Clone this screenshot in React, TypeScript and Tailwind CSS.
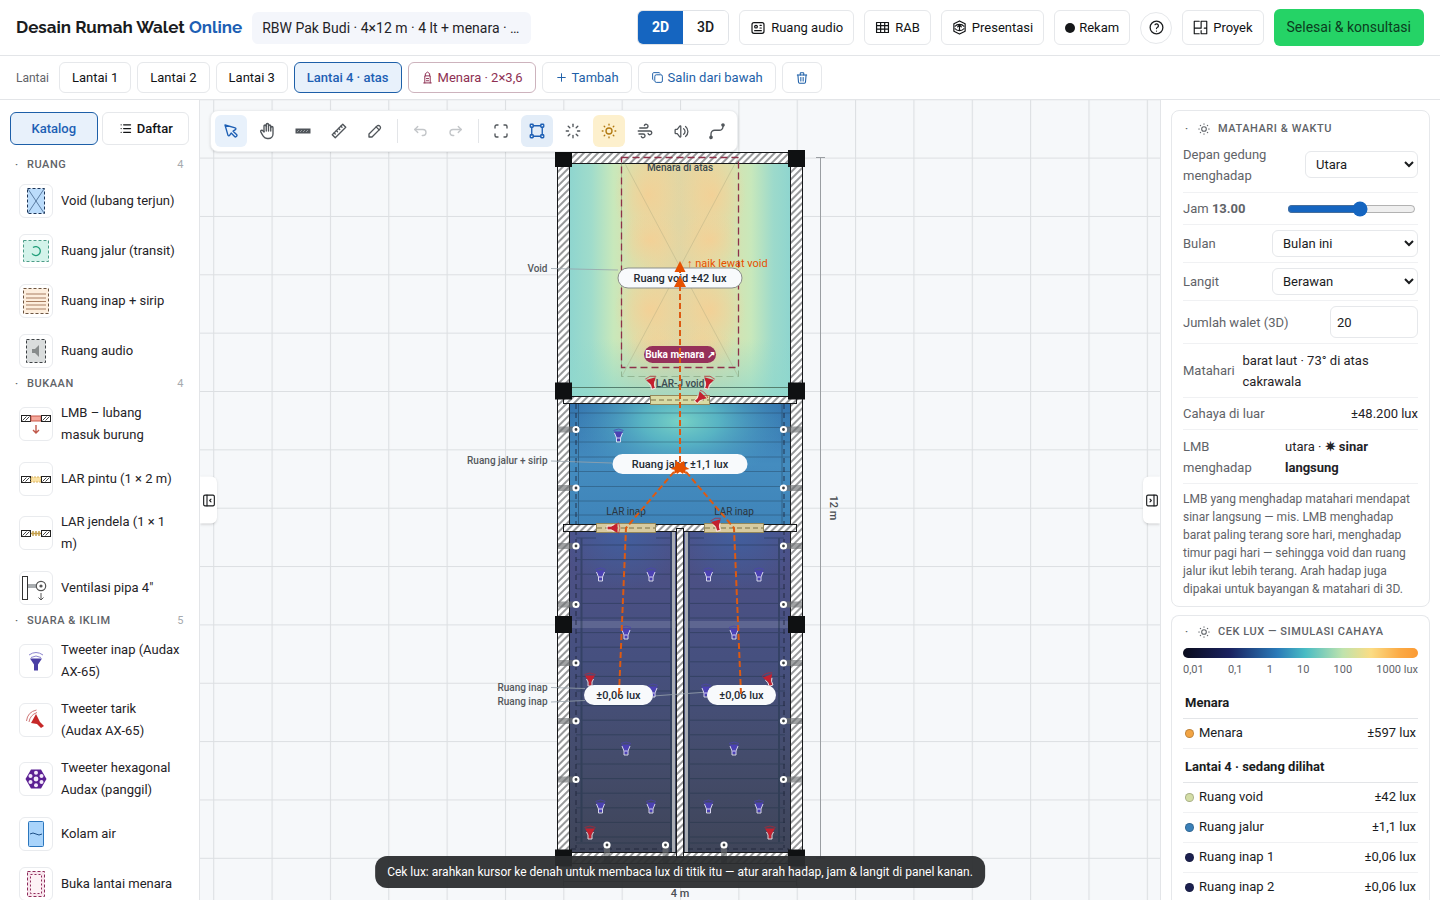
import React from "react";
import type { ReactNode } from "react";
import {
  TbPointer,
  TbHandStop,
  TbRuler2,
  TbPencil,
  TbArrowBackUp,
  TbArrowForwardUp,
  TbMaximize,
  TbVector,
  TbLoader,
  TbSun,
  TbWind,
  TbVolume,
  TbId,
  TbHelp,
  TbTrash,
  TbCopy,
  TbList,
  TbPlus,
  TbLayoutSidebarLeftCollapse,
  TbLayoutSidebarRightCollapse,
} from "react-icons/tb";

/* ---------- small custom icons ---------- */

function Line({ children, size = 16, width = 1.6 }: { children: ReactNode; size?: number; width?: number }) {
  return (
    <svg
      width={size}
      height={size}
      viewBox="0 0 24 24"
      fill="none"
      stroke="currentColor"
      strokeWidth={width}
      strokeLinecap="round"
      strokeLinejoin="round"
      aria-hidden="true"
    >
      {children}
    </svg>
  );
}

const TableIcon = () => (
  <Line size={15} width={1.9}>
    <path d="M2.500 4h19v16h-19zM2.500 9h19M2.500 14.500h19M9 4v16M15.500 4v16" />
  </Line>
);

const CubeIcon = () => (
  <Line size={15} width={1.9}>
    <path d="M12 1.500l9 4.500v12l-9 4.500l-9 -4.500v-12z" />
    <path d="M5 10c3 -4 11 -4 14 0M5 14c3 4 11 4 14 0M12 9v8M9 11l3 -2.500l3 2.500" />
  </Line>
);

const PlanIcon = () => (
  <Line size={15} width={1.8}>
    <path d="M10 2H2v20h8M2 13h7M13 2v11h-3M13 2h9v20h-9v-5M22 13h-4" />
  </Line>
);

const TowerIcon = () => (
  <Line size={13} width={1.8}>
    <path d="M5 22h14M7 22V9h10v13M8 9V5l4 -3l4 3v4M10 14h4M10 18h4" />
  </Line>
);

const WallIcon = () => (
  <svg width="18" height="18" viewBox="0 0 18 18" aria-hidden="true">
    <rect x="1.500" y="6.500" width="15" height="5" fill="currentColor" />
    <path d="M3 10l2-2M6 10l2-2M9 10l2-2M12 10l2-2" stroke="#c8ccd0" strokeWidth=".6" />
  </svg>
);

const PathIcon = () => (
  <Line size={18} width={1.8}>
    <path d="M4 20v-4a5 5 0 0 1 5 -5h6a5 5 0 0 0 5 -5" />
    <circle cx="4" cy="20.500" r="1.500" fill="currentColor" />
    <circle cx="20" cy="4" r="1.500" fill="currentColor" />
  </Line>
);

/* ---------- header ---------- */

const headerButton =
  "flex h-[35px] items-center gap-[5px] rounded-md border border-[#e6e8eb] bg-white px-[10px] text-[13px] text-[#111315]";

function Header() {
  return (
    <header className="flex h-14 shrink-0 items-center gap-[10px] border-b border-[#e3e5e8] px-4">
      <h1 className="whitespace-nowrap font-['Raleway','Lato',sans-serif] text-[17px] font-bold text-[#1a1c1e]">
        Desain Rumah Walet <span className="text-[#1d5fb4]">Online</span>
      </h1>
      <div className="w-[279px] truncate rounded-md bg-[#f4f6fb] px-[10px] py-[6px] text-[14px] leading-5 text-[#1f2327]">
        RBW Pak Budi · 4×12 m · 4 lt + menara · …
      </div>
      <div className="ml-auto flex items-center gap-[10px]">
        <div className="flex h-[35px] overflow-hidden rounded-md border border-[#e0e3e7]">
          <button type="button" className="w-[45px] bg-[#1565c0] text-[14px] font-bold text-white">
            2D
          </button>
          <button type="button" className="w-[45px] bg-white text-[14px] font-medium text-[#1a1c1e]">
            3D
          </button>
        </div>
        <button type="button" className={headerButton}>
          <TbId size={16} strokeWidth={1.8} /> Ruang audio
        </button>
        <button type="button" className={headerButton}>
          <TableIcon /> RAB
        </button>
        <button type="button" className={headerButton}>
          <CubeIcon /> Presentasi
        </button>
        <button
          type="button"
          className="flex h-[35px] items-center gap-1 rounded-md border border-[#e6e8eb] bg-white px-[10px] text-[13px] text-[#111315]"
        >
          <span className="size-[10px] rounded-full bg-[#151719]" /> Rekam
        </button>
        <button
          type="button"
          aria-label="Bantuan"
          className="flex size-8 items-center justify-center rounded-full border border-[#e6e8eb] text-[#1a1c1e]"
        >
          <TbHelp size={17} strokeWidth={1.8} />
        </button>
        <button type="button" className={headerButton}>
          <PlanIcon /> Proyek
        </button>
        <button type="button" className="h-[37px] rounded-md bg-[#25d366] px-[13px] text-[14px] text-[#0b3d1e]">
          Selesai &amp; konsultasi
        </button>
      </div>
    </header>
  );
}

const floorButton = "flex h-[31px] items-center gap-1 rounded-md border px-3 text-[13px]";

function FloorBar() {
  return (
    <nav aria-label="Lantai" className="flex h-11 shrink-0 items-center gap-[6px] border-b border-[#e3e5e8] px-4">
      <span className="mr-1 text-[12px] text-[#5f6368]">Lantai</span>
      {["Lantai 1", "Lantai 2", "Lantai 3"].map((name) => (
        <button key={name} type="button" className={`${floorButton} border-[#e6e8eb] text-[#111315]`}>
          {name}
        </button>
      ))}
      <button type="button" className={`${floorButton} border-[#1d5fa8] bg-[#e8f1fb] font-medium text-[#1d5fb4]`}>
        Lantai 4 · atas
      </button>
      <button type="button" className={`${floorButton} border-[#cdb3bd] text-[#8e2f52]`}>
        <TowerIcon /> Menara · 2×3,6
      </button>
      <button type="button" className={`${floorButton} border-[#e6e8eb] text-[#1d5fa8]`}>
        <TbPlus size={13} strokeWidth={1.8} /> Tambah
      </button>
      <button type="button" className={`${floorButton} border-[#e6e8eb] text-[#1d5fa8]`}>
        <TbCopy size={13} strokeWidth={1.8} /> Salin dari bawah
      </button>
      <button type="button" aria-label="Hapus lantai" className={`${floorButton} border-[#e6e8eb] text-[#1d5fa8]`}>
        <TbTrash size={14} strokeWidth={1.8} />
      </button>
    </nav>
  );
}

/* ---------- catalogue ---------- */

const Hatch = ({ x, y, w }: { x: number; y: number; w: number }) => (
  <g>
    <rect x={x} y={y} width={w} height="6" fill="#fff" stroke="#222" />
    <path d={`M${x + 1} ${y + 5}l4 -4M${x + 4} ${y + 5}l4 -4`} stroke="#333" strokeWidth=".9" />
  </g>
);

const icons: Record<string, ReactNode> = {
  void: (
    <>
      <rect x="7.500" y="3.500" width="17" height="25" fill="#bbdcfb" stroke="#1d3557" strokeDasharray="3 2" />
      <path d="M8 4l16 24M24 4L8 28" stroke="#44658c" strokeWidth=".8" />
    </>
  ),
  jalur: (
    <>
      <rect x="3.500" y="5.500" width="25" height="21" fill="#d3f3ea" stroke="#4d9d88" strokeDasharray="3 2" />
      <path d="M13 12.500a4.500 4.500 0 1 1 -1 6" fill="none" stroke="#1f9d78" strokeWidth="1.300" />
    </>
  ),
  inap: (
    <>
      <rect x="3.500" y="3.500" width="25" height="25" fill="#fdeedd" stroke="#6d5540" strokeDasharray="3 2" />
      <path d="M6 9h20M6 13h20M6 16.500h20M6 20h20M6 24h20" stroke="#a97f62" />
    </>
  ),
  audio: (
    <>
      <rect x="6.500" y="4.500" width="19" height="23" fill="#dadddd" stroke="#3d4144" strokeDasharray="3 2" />
      <path d="M12 14h3l4 -4v12l-4 -4h-3z" fill="#888c8c" />
    </>
  ),
  lmb: (
    <>
      <Hatch x={1.5} y={7.5} w={9} />
      <rect x="11" y="8" width="10" height="5" fill="#f5a79a" stroke="#c9584a" />
      <Hatch x={21.5} y={7.5} w={9} />
      <path d="M16 17v8m-3 -3l3 3l3 -3" fill="none" stroke="#c0584a" strokeWidth="1.400" />
    </>
  ),
  pintu: (
    <>
      <Hatch x={1.5} y={13.5} w={9} />
      <rect x="11" y="14" width="10" height="5" fill="#fbe2a3" stroke="#d9b262" strokeDasharray="2 1" />
      <Hatch x={21.5} y={13.5} w={9} />
    </>
  ),
  jendela: (
    <>
      <Hatch x={1.5} y={13.5} w={9} />
      <path d="M11 16.500h10M13 14v5M16 14v5M19 14v5" stroke="#c4a04c" strokeWidth="1.500" />
      <Hatch x={21.5} y={13.5} w={9} />
    </>
  ),
  pipa: (
    <>
      <rect x="2.500" y="4.500" width="5" height="23" fill="#fff" stroke="#333" />
      <rect x="8" y="12" width="9" height="4" fill="#a9adb0" />
      <circle cx="21" cy="14" r="4.700" fill="#fff" stroke="#555" strokeWidth="1.200" />
      <circle cx="21" cy="14" r="1.600" fill="#555" />
      <path d="M21 21v7m-2.500 -2.500l2.500 2.500l2.500 -2.500" fill="none" stroke="#555" />
    </>
  ),
  tweeterInap: (
    <>
      <path d="M10 13.500h12l-4 6v6h-4v-6z" fill="#4a3fa5" />
      <path d="M9 10q7 -5 14 0M11 12.500q5 -3 10 0" fill="none" stroke="#8d86cf" />
    </>
  ),
  tweeterTarik: (
    <>
      <path d="M16 10l-5 9l6 1l4 4l3 -2l-4 -4z" fill="#c62828" />
      <path d="M6.500 17q1 -9 10 -11M9 18q1 -7 8 -9.500" fill="none" stroke="#cf7777" />
    </>
  ),
  hexagonal: (
    <>
      <path d="M11 6.500h10l5.500 9.500l-5.500 9.500H11L5.500 16z" fill="#5b1f93" />
      <g fill="#f3e9fb">
        <circle cx="16" cy="16" r="2.400" />
        <circle cx="16" cy="9.800" r="2" />
        <circle cx="16" cy="22.200" r="2" />
        <circle cx="10.500" cy="13" r="2" />
        <circle cx="21.500" cy="13" r="2" />
        <circle cx="10.500" cy="19" r="2" />
        <circle cx="21.500" cy="19" r="2" />
      </g>
    </>
  ),
  kolam: (
    <>
      <rect x="8.500" y="3.500" width="15" height="25" rx="1" fill="#a9d4fb" stroke="#2b76bd" />
      <path d="M10 16q3 -2 6 0t6 0" fill="none" stroke="#1d4f86" />
    </>
  ),
  menara: (
    <>
      <rect x="7.500" y="3.500" width="17" height="25" fill="#f8e4ec" stroke="#8e2a5a" strokeDasharray="3 2" />
      <rect x="10.500" y="6.500" width="11" height="19" fill="#fdf2f6" stroke="#8e2a5a" strokeDasharray="2 2" />
    </>
  ),
};

const groups = [
  {
    title: "RUANG",
    count: 4,
    items: [
      ["void", "Void (lubang terjun)"],
      ["jalur", "Ruang jalur (transit)"],
      ["inap", "Ruang inap + sirip"],
      ["audio", "Ruang audio"],
    ],
  },
  {
    title: "BUKAAN",
    count: 4,
    items: [
      ["lmb", "LMB – lubang masuk burung"],
      ["pintu", "LAR pintu (1 × 2 m)"],
      ["jendela", "LAR jendela (1 × 1 m)"],
      ["pipa", 'Ventilasi pipa 4"'],
    ],
  },
  {
    title: "SUARA & IKLIM",
    count: 5,
    items: [
      ["tweeterInap", "Tweeter inap (Audax AX-65)"],
      ["tweeterTarik", "Tweeter tarik (Audax\u00a0AX-65)"],
      ["hexagonal", "Tweeter hexagonal Audax (panggil)"],
      ["kolam", "Kolam air"],
      ["menara", "Buka lantai menara"],
    ],
  },
];

function Catalogue() {
  return (
    <aside className="w-[200px] shrink-0 overflow-hidden border-r border-[#e3e5e8] bg-white">
      <div className="flex gap-1 px-[10px] pt-3 pb-3">
        <button
          type="button"
          className="h-[33px] flex-1 rounded-md border border-[#1d5fa8] bg-[#e8f1fb] text-[13px] font-medium text-[#1d5fb4]"
        >
          Katalog
        </button>
        <button
          type="button"
          className="flex h-[33px] flex-1 items-center justify-center gap-1 rounded-md border border-[#e6e8eb] text-[13px] font-medium text-[#111315]"
        >
          <TbList size={15} strokeWidth={2} /> Daftar
        </button>
      </div>
      {groups.map((group) => (
        <section key={group.title}>
          <h2 className="flex h-[19px] items-start justify-between px-[15px] pt-px text-[11px] leading-[14px] font-medium tracking-wider text-[#5f6368]">
            <span>
              <span className="inline-block w-3">·</span>
              {group.title}
            </span>
            <span className="font-normal text-[#a6aaae]">{group.count}</span>
          </h2>
          <ul>
            {group.items.map(([icon, name]) => (
              <li key={icon} className="flex min-h-[50px] items-center gap-2 pt-[7px] pr-4 pb-2 pl-[19px]">
                <span className="flex size-[34px] shrink-0 items-center justify-center rounded-md border border-[#e9ebee]">
                  <svg width="32" height="32" viewBox="0 0 32 32" aria-hidden="true">
                    {icons[icon]}
                  </svg>
                </span>
                <span className="text-[13px] leading-[22px] text-[#1f2327]">{name}</span>
              </li>
            ))}
          </ul>
        </section>
      ))}
    </aside>
  );
}

/* ---------- floor plan ---------- */

const ventRows = [429.5, 488, 546, 604.5, 663, 721, 779.5];
const ventCols = [607, 665.5, 724];
const columnRows = [158.5, 391, 624.5, 858];
const corridorFins = [413, 427.5, 442, 457, 471.5, 486.5, 501, 515];
const roostFins = Array.from({ length: 21 }, (_, i) => 545 + i * 14.6);

const blueTweeters = [
  [618.5, 436], [600.5, 575], [651, 575], [708.5, 575], [759, 575], [626, 633], [734, 633],
  [653, 691], [706, 691], [626, 749], [734, 749], [600.5, 807], [651, 807], [708.5, 807], [759, 807],
];

const redTweeters = [
  [590, 680, 0], [769, 680, -20], [590, 833, 0], [770, 833, 0],
  [652, 383, -15], [708, 383, 15], [700, 398, 45], [613, 528, 90], [717, 525, -15],
];

function Tweeter({ x, y, turn = 0, color }: { x: number; y: number; turn?: number; color: string }) {
  return (
    <g transform={`translate(${x} ${y}) rotate(${turn})`}>
      <path d="M-4.500 -4.500h9l-2.500 5.500v4h-4v-4z" fill={color} />
      <path d="M-4 -3l2 5v4h4v-4l2 -5M-1.500 2h3" fill="none" stroke="#e6e4fb" strokeWidth=".9" />
      <path d="M-5 -5.500q5 -3 10 0" fill="none" stroke={color} strokeWidth="1" opacity=".7" />
    </g>
  );
}

function RedTweeter({ x, y, turn }: { x: number; y: number; turn: number }) {
  return (
    <g transform={`translate(${x} ${y}) rotate(${turn})`}>
      <path d="M-5 -4.500h10l-3.500 6v4h-3v-4z" fill="#c4202f" />
      <path d="M-3.500 -1l1.500 3v4h4v-4l1.500 -3" fill="none" stroke="#fbe3e3" strokeWidth=".9" />
      <path d="M-5.500 -5.500q5.500 -3 11 0" fill="none" stroke="#c4202f" strokeWidth=".9" opacity=".7" />
    </g>
  );
}

function Pill({ x, y, w, stroke = "none", children }: { x: number; y: number; w: number; stroke?: string; children: string }) {
  return (
    <g>
      <rect x={x - w / 2} y={y - 10} width={w} height="20" rx="10" fill="#f8fafc" stroke={stroke} />
      <text x={x} y={y + 4} textAnchor="middle" fontSize="11" fontWeight="500" fill="#1f2a33">
        {children}
      </text>
    </g>
  );
}

function FloorPlan() {
  return (
    <svg
      role="img"
      aria-label="Denah lantai 4"
      className="block size-full font-['Roboto',sans-serif]"
      viewBox="200 100 960 800"
      preserveAspectRatio="xMidYMid slice"
    >
      <defs>
        <pattern id="grid" x="563.300" y="157.600" width="58.350" height="58.350" patternUnits="userSpaceOnUse">
          <path d="M.5 0V58.350M0 .5H58.350" stroke="#dcdfe2" strokeWidth="1.200" />
        </pattern>
        <pattern id="brick" width="5" height="5" patternUnits="userSpaceOnUse" patternTransform="rotate(45)">
          <rect width="5" height="5" fill="#fff" />
          <path d="M1 0v5" stroke="#303336" strokeWidth="1" />
        </pattern>
        <linearGradient id="voidHeat">
          <stop offset="0" stopColor="#8ed5cf" />
          <stop offset=".1" stopColor="#a0dccb" />
          <stop offset=".2" stopColor="#c8e8bb" />
          <stop offset=".29" stopColor="#dbdfab" />
          <stop offset=".4" stopColor="#e6d8a2" />
          <stop offset=".5" stopColor="#e1d6a4" />
          <stop offset=".6" stopColor="#e6d8a2" />
          <stop offset=".72" stopColor="#d9e0ad" />
          <stop offset=".82" stopColor="#c8e8bb" />
          <stop offset=".92" stopColor="#9ddacb" />
          <stop offset="1" stopColor="#8ed5cf" />
        </linearGradient>
        <linearGradient id="voidFade" x2="0" y2="1">
          <stop offset=".75" stopColor="#8fd8cc" stopOpacity="0" />
          <stop offset="1" stopColor="#8fd8cc" stopOpacity=".75" />
        </linearGradient>
        <radialGradient id="warm">
          <stop offset="0" stopColor="#f5cf94" stopOpacity=".85" />
          <stop offset="1" stopColor="#f1d39a" stopOpacity="0" />
        </radialGradient>
        <linearGradient id="corridor" x2="0" y2="1">
          <stop offset="0" stopColor="#3473ad" />
          <stop offset=".5" stopColor="#448cbf" />
          <stop offset="1" stopColor="#3f84b9" />
        </linearGradient>
        <radialGradient id="glow" cx=".5" cy=".15" r=".5">
          <stop offset="0" stopColor="#78d2c5" />
          <stop offset=".35" stopColor="#5dbdc6" stopOpacity=".85" />
          <stop offset="1" stopColor="#4a9bc6" stopOpacity="0" />
        </radialGradient>
        <linearGradient id="roost" x2="0" y2="1">
          <stop offset="0" stopColor="#4e5087" />
          <stop offset=".4" stopColor="#46507f" />
          <stop offset=".7" stopColor="#444c6c" />
          <stop offset="1" stopColor="#3f4559" />
        </linearGradient>
        <radialGradient id="doorGlow" cx=".5" cy="0" r=".6">
          <stop offset="0" stopColor="#3d63a5" stopOpacity=".8" />
          <stop offset="1" stopColor="#3d63a5" stopOpacity="0" />
        </radialGradient>
      </defs>

      <rect x="0" y="0" width="1640" height="1000" fill="#f6f8fa" />
      <rect x="0" y="0" width="1640" height="1000" fill="url(#grid)" />

      {/* dimension lines */}
      <path
        d="M820.500 157.500V858M816 157.500h9M816 858h9M563.500 881.500h233M563.500 877v9M796.500 877v9"
        stroke="#9a9ea2"
        fill="none"
      />
      <text x="680" y="897" textAnchor="middle" fontSize="11" fontWeight="500" fill="#4b4f53">
        4 m
      </text>
      <text transform="translate(830 508) rotate(90)" textAnchor="middle" fontSize="11" fontWeight="500" fill="#4b4f53">
        12 m
      </text>

      {/* rooms */}
      <rect x="569" y="163" width="222" height="234" fill="url(#voidHeat)" />
      <ellipse cx="648" cy="195" rx="34" ry="50" fill="url(#warm)" />
      <ellipse cx="712" cy="195" rx="34" ry="50" fill="url(#warm)" />
      <ellipse cx="650" cy="240" rx="32" ry="28" fill="url(#warm)" />
      <ellipse cx="710" cy="240" rx="32" ry="28" fill="url(#warm)" />
      <ellipse cx="650" cy="310" rx="36" ry="40" fill="url(#warm)" />
      <ellipse cx="710" cy="310" rx="36" ry="40" fill="url(#warm)" />
      <ellipse cx="656" cy="350" rx="30" ry="24" fill="url(#warm)" />
      <ellipse cx="704" cy="350" rx="30" ry="24" fill="url(#warm)" />
      <rect x="569" y="163" width="222" height="234" fill="url(#voidFade)" />
      <rect x="569" y="403" width="222" height="122" fill="url(#corridor)" />
      <rect x="569" y="403" width="222" height="122" fill="url(#glow)" />
      <rect x="569" y="531" width="108" height="322" fill="url(#roost)" />
      <rect x="683" y="531" width="108" height="322" fill="url(#roost)" />
      <rect x="569" y="531" width="108" height="100" fill="url(#doorGlow)" />
      <rect x="683" y="531" width="108" height="100" fill="url(#doorGlow)" />
      <rect x="569" y="621" width="222" height="7" fill="#8a90b0" opacity=".35" />

      {/* nesting fins */}
      <g stroke="#1c3144" opacity=".42">
        {corridorFins.map((y) => (
          <path key={y} d={`M570 ${y}H790`} strokeWidth=".8" />
        ))}
        {roostFins.map((y) => (
          <path key={y} d={`M576 ${y}H672M688 ${y}H785`} />
        ))}
        <path d="M578.500 404V524M782 404V524" />
        <path d="M581.500 538V842M671 531V853M689 531V853M779 538V842" strokeWidth="2" />
        <path d="M576 538h20M656 538h16M688 538h16M764 538h20M576 843h96M688 843h96" />
      </g>
      <path d="M576 404V848M784 404V848M571 849H789" stroke="#1b2234" strokeDasharray="5 4" opacity=".8" fill="none" />
      <path d="M673.500 532V853M686.500 532V853" stroke="#a9adb3" strokeWidth="3" />
      <path d="M569 387.500H790" stroke="#55806f" />

      {/* walls */}
      <g fill="url(#brick)" stroke="#16181a">
        <rect x="557.500" y="152.500" width="245" height="11" />
        <rect x="557.500" y="163.500" width="12" height="689" />
        <rect x="790.500" y="163.500" width="12" height="689" />
        <rect x="557.500" y="852.500" width="245" height="11" />
        <rect x="563.500" y="396.500" width="87" height="7" />
        <rect x="709.500" y="396.500" width="87" height="7" />
        <rect x="563.500" y="524.500" width="33" height="7" />
        <rect x="655.500" y="524.500" width="49" height="7" />
        <rect x="763.500" y="524.500" width="33" height="7" />
        <rect x="676.500" y="528.500" width="7" height="329" />
      </g>
      <g fill="#d9dba4" stroke="#93875a">
        <rect x="650.500" y="395.500" width="59" height="9" />
        <rect x="596.500" y="523.500" width="59" height="9" fill="#d8cba0" />
        <rect x="704.500" y="523.500" width="59" height="9" fill="#d8cba0" />
      </g>
      <path d="M651 400h58M597 528h58M705 528h58" stroke="#7b7146" strokeDasharray="5 3" />

      {/* pipe vents */}
      {ventRows.map((y) => (
        <g key={y}>
          <path d={`M558 ${y}h18M784 ${y}h18`} stroke="#6f7274" strokeWidth="6" opacity=".65" />
          <g fill="#3d4144" stroke="#fff" strokeWidth="2.200">
            <circle cx="576" cy={y} r="2.500" />
            <circle cx="783.500" cy={y} r="2.500" />
          </g>
        </g>
      ))}
      {ventCols.map((x) => (
        <g key={x}>
          <path d={`M${x} 845v18`} stroke="#6f7274" strokeWidth="6" opacity=".65" />
          <circle cx={x} cy="845" r="2.500" fill="#3d4144" stroke="#fff" strokeWidth="2.200" />
        </g>
      ))}

      {/* columns */}
      {columnRows.map((y) => (
        <g key={y} fill="#0f1112">
          <rect x="555" y={y - 8.5} width="17" height="17" />
          <rect x="788" y={y - 8.5} width="17" height="17" />
        </g>
      ))}

      {/* tower opening above the void */}
      <rect x="621.500" y="157.500" width="117" height="219" fill="none" stroke="#6f8f6a" strokeDasharray="7 4" opacity=".5" />
      <path d="M622 158L738 376M738 158L622 376" stroke="#9c9d78" opacity=".3" />
      <rect
        x="621.500"
        y="157.500"
        width="117"
        height="210"
        fill="none"
        stroke="#8e3049"
        strokeWidth="1.300"
        strokeDasharray="7 4"
      />

      {/* callout labels */}
      <g fontSize="10" fontWeight="500" fill="#55595d" textAnchor="end">
        <text x="547.500" y="272">Void</text>
        <text x="547.500" y="464">Ruang jalur + sirip</text>
        <text x="547.500" y="691">Ruang inap</text>
        <text x="547.500" y="705">Ruang inap</text>
      </g>
      <path
        d="M551 268.500L618 270M551 461L612 463M551 687.500L585 688.500M551 702L585 700.500M653 696L708 692"
        stroke="#97a3ab"
        opacity=".8"
        fill="none"
      />

      {blueTweeters.map(([x, y]) => (
        <Tweeter key={`${x}-${y}`} x={x} y={y} color="#4b41b3" />
      ))}
      {redTweeters.map(([x, y, turn]) => (
        <RedTweeter key={`${x}-${y}`} x={x} y={y} turn={turn === 90 ? 90 : turn} />
      ))}

      <g fontSize="10" fontWeight="500" fill="#3b4a50" textAnchor="middle">
        <text x="680" y="171">Menara di atas</text>
        <text x="680" y="387">LAR-J void</text>
        <g fill="#2a3640" fontWeight="400">
          <text x="626" y="515">LAR inap</text>
          <text x="734" y="515">LAR inap</text>
        </g>
      </g>

      <Pill x={680} y={278} w={124} stroke="#8b8f8c">Ruang void ±42 lux</Pill>
      <Pill x={680} y={464} w={135}>Ruang jalur ±1,1 lux</Pill>
      <Pill x={618.500} y={695} w={69}>±0,06 lux</Pill>
      <Pill x={741.500} y={695} w={69}>±0,06 lux</Pill>

      <rect x="644" y="346" width="72" height="17" rx="8.500" fill="#96305a" />
      <text x="680" y="358" textAnchor="middle" fontSize="10" fontWeight="700" fill="#fff">
        Buka menara ↗
      </text>

      {/* flight route */}
      <g stroke="#dd5a12" strokeWidth="2" strokeDasharray="6 3" fill="none">
        <path d="M680 462V270" />
        <path d="M619 694L626 528L679 466" />
        <path d="M741 694L734 528L681 466" />
      </g>
      <g fill="#e65100">
        <path d="M680 261l5.500 11h-11z" />
        <path d="M680 276l6 11h-12z" />
        <path d="M684 461l2 13l-5 -3l-4 3l-1.500 -4l-5 -1z" />
        <path d="M676 461l-2 13l5 -3l4 3l1.500 -4l5 -1z" />
      </g>
      <text x="687" y="267" fontSize="11" fill="#e65100">
        ↑ naik lewat void
      </text>
    </svg>
  );
}

const tool = "flex size-8 items-center justify-center rounded-md";

function Toolbar() {
  const divider = <span className="mx-[2px] h-6 w-px bg-[#e3e5e8]" />;
  return (
    <div
      role="toolbar"
      aria-label="Alat gambar"
      className="absolute top-[10px] left-[10px] flex items-center gap-1 rounded-lg border border-[#eceef0] bg-white p-1 text-[#50555a] shadow-sm"
    >
      <button type="button" aria-label="Pilih" className={`${tool} bg-[#e8f1fb] text-[#1d5fb4]`}>
        <TbPointer size={18} strokeWidth={1.8} />
      </button>
      <button type="button" aria-label="Geser" className={tool}>
        <TbHandStop size={18} strokeWidth={1.8} />
      </button>
      <button type="button" aria-label="Dinding" className={tool}>
        <WallIcon />
      </button>
      <button type="button" aria-label="Ukur" className={tool}>
        <TbRuler2 size={18} strokeWidth={1.8} />
      </button>
      <button type="button" aria-label="Catatan" className={tool}>
        <TbPencil size={18} strokeWidth={1.8} />
      </button>
      {divider}
      <button type="button" aria-label="Urungkan" className={`${tool} text-[#c3c6c9]`}>
        <TbArrowBackUp size={18} strokeWidth={1.8} />
      </button>
      <button type="button" aria-label="Ulangi" className={`${tool} text-[#c3c6c9]`}>
        <TbArrowForwardUp size={18} strokeWidth={1.8} />
      </button>
      {divider}
      <button type="button" aria-label="Paskan layar" className={tool}>
        <TbMaximize size={18} strokeWidth={1.8} />
      </button>
      <button type="button" aria-label="Bingkai ruang" className={`${tool} bg-[#e3edf8] text-[#1d5fb4]`}>
        <TbVector size={18} strokeWidth={1.8} />
      </button>
      <button type="button" aria-label="Sorot" className={tool}>
        <TbLoader size={18} strokeWidth={1.8} />
      </button>
      <button type="button" aria-label="Cek lux" className={`${tool} bg-[#fdf0cd] text-[#b27a12]`}>
        <TbSun size={18} strokeWidth={1.8} />
      </button>
      <button type="button" aria-label="Aliran udara" className={tool}>
        <TbWind size={18} strokeWidth={1.8} />
      </button>
      <button type="button" aria-label="Suara" className={tool}>
        <TbVolume size={17} strokeWidth={1.8} />
      </button>
      <button type="button" aria-label="Jalur terbang" className={tool}>
        <PathIcon />
      </button>
    </div>
  );
}

function Canvas() {
  return (
    <main className="relative min-w-0 flex-1 overflow-hidden">
      <FloorPlan />
      <Toolbar />
      <button
        type="button"
        aria-label="Tutup katalog"
        className="absolute top-1/2 left-0 flex h-[47px] w-[17px] -translate-y-1/2 items-center justify-center rounded-r-md bg-white text-[#1a1c1e] shadow"
      >
        <TbLayoutSidebarLeftCollapse size={16} strokeWidth={1.7} />
      </button>
      <button
        type="button"
        aria-label="Tutup panel"
        className="absolute top-1/2 right-0 flex h-[47px] w-[17px] -translate-y-1/2 items-center justify-center rounded-l-md bg-white text-[#1a1c1e] shadow"
      >
        <TbLayoutSidebarRightCollapse size={16} strokeWidth={1.7} />
      </button>
      <p
        role="status"
        className="absolute bottom-3 left-1/2 -translate-x-1/2 rounded-xl bg-[#2b2d2f]/95 px-3 py-[6px] text-[12px] leading-5 whitespace-nowrap text-white"
      >
        Cek lux: arahkan kursor ke denah untuk membaca lux di titik itu — atur arah hadap, jam &amp; langit di panel kanan.
      </p>
    </main>
  );
}

/* ---------- right panel ---------- */

function CardTitle({ children }: { children: ReactNode }) {
  return (
    <h2 className="flex h-4 items-center text-[11px] font-medium tracking-wider text-[#5f6368]">
      <span className="w-[14px] pl-[2px]">·</span>
      <TbSun size={14} strokeWidth={1.8} />
      <span className="ml-[7px]">{children}</span>
    </h2>
  );
}

const row = "flex items-center justify-between gap-2 border-b border-[#f0f1f3] leading-[21px]";
const field = "rounded-md border border-[#e6e8eb] bg-white text-[13px] text-[#1a1c1e]";

const lux = [
  { group: "Menara", rows: [["Menara", "±597 lux", "bg-[#f2a444]"]] },
  {
    group: "Lantai 4 · sedang dilihat",
    rows: [
      ["Ruang void", "±42 lux", "bg-[#d3dda6]"],
      ["Ruang jalur", "±1,1 lux", "bg-[#3a80b8]"],
      ["Ruang inap 1", "±0,06 lux", "bg-[#1c2150]"],
      ["Ruang inap 2", "±0,06 lux", "bg-[#1c2150]"],
    ],
  },
];

function Panel() {
  return (
    <aside className="flex w-[280px] shrink-0 flex-col gap-2 overflow-hidden border-l border-[#e3e5e8] bg-white px-[10px] pt-[10px]">
      <section className="shrink-0 rounded-lg border border-[#e6e8eb] px-[11px] pt-[10px] pb-2 text-[13px] text-[#5f6368]">
        <CardTitle>MATAHARI &amp; WAKTU</CardTitle>
        <div className={`${row} h-14`}>
          <label htmlFor="facing" className="w-[110px]">
            Depan gedung menghadap
          </label>
          <select id="facing" className={`${field} h-[27px] w-[113px] px-[6px]`}>
            <option>Utara</option>
          </select>
        </div>
        <div className={`${row} h-8`}>
          <label htmlFor="hour">
            Jam <b>13.00</b>
          </label>
          <input id="hour" type="range" min={5} max={19} defaultValue={13} className="mr-[2px] w-[129px] accent-[#1565c0]" />
        </div>
        <div className={`${row} h-[38px]`}>
          <label htmlFor="month">Bulan</label>
          <select id="month" className={`${field} h-[27px] w-[146px] px-[6px]`}>
            <option>Bulan ini</option>
          </select>
        </div>
        <div className={`${row} h-[38px]`}>
          <label htmlFor="sky">Langit</label>
          <select id="sky" className={`${field} h-[27px] w-[146px] px-[6px]`}>
            <option>Berawan</option>
          </select>
        </div>
        <div className={`${row} h-[43px]`}>
          <label htmlFor="birds">Jumlah walet (3D)</label>
          <input id="birds" type="text" inputMode="numeric" defaultValue="20" className={`${field} h-8 w-[88px] px-[6px]`} />
        </div>
        <div className={`${row} h-[54px]`}>
          <span>Matahari</span>
          <span className="w-[176px] text-[#1f2327]">barat laut · 73° di atas cakrawala</span>
        </div>
        <div className={`${row} h-8`}>
          <span>Cahaya di luar</span>
          <span className="text-[#1f2327]">±48.200 lux</span>
        </div>
        <div className={`${row} h-[54px]`}>
          <span className="w-[80px]">LMB menghadap</span>
          <span className="w-[133px] pr-8 text-[#1f2327]">
            utara · <b className="font-bold">✷ sinar langsung</b>
          </span>
        </div>
        <p className="pt-[6px] text-[12px] leading-[18px]">
          LMB yang menghadap matahari mendapat sinar langsung — mis. LMB menghadap barat paling terang sore hari,
          menghadap timur pagi hari — sehingga void dan ruang jalur ikut lebih terang. Arah hadap juga dipakai untuk
          bayangan &amp; matahari di 3D.
        </p>
      </section>

      <section className="shrink-0 rounded-t-lg border border-b-0 border-[#e6e8eb] px-[11px] pt-2 text-[13px]">
        <CardTitle>CEK LUX — SIMULASI CAHAYA</CardTitle>
        <div className="mt-2 h-[10px] rounded-full bg-[linear-gradient(90deg,#0a0c1c_0%,#1a2260_20%,#2a7ab8_40%,#49bcc4_52%,#bfe3ad_68%,#fbdc84_80%,#fbab46_92%,#fb9a33_100%)]" />
        <div className="flex justify-between pt-1 text-[11px] leading-4 text-[#5f6368]">
          <span>0,01</span>
          <span>0,1</span>
          <span>1</span>
          <span>10</span>
          <span>100</span>
          <span>1000 lux</span>
        </div>
        <table className="mt-[6px] w-full border-collapse text-[#1a1c1e]">
          {lux.map(({ group, rows }) => (
            <tbody key={group}>
              <tr className="border-b border-[#e3e5e8]">
                <th colSpan={2} scope="colgroup" className="h-[34px] px-[2px] pt-1 text-left font-bold">
                  {group}
                </th>
              </tr>
              {rows.map(([name, value, color]) => (
                <tr key={name} className="h-[30px] border-b border-[#f0f1f3]">
                  <td className="px-[2px]">
                    <span className="flex items-center gap-[5px]">
                      <span className={`size-[9px] rounded-full border border-black/20 ${color}`} />
                      {name}
                    </span>
                  </td>
                  <td className="px-[2px] text-right">{value}</td>
                </tr>
              ))}
            </tbody>
          ))}
        </table>
      </section>
    </aside>
  );
}

export default function App() {
  return (
    <div className="flex h-screen flex-col overflow-hidden bg-white font-['Roboto',sans-serif]">
      <Header />
      <FloorBar />
      <div className="flex min-h-0 flex-1">
        <Catalogue />
        <Canvas />
        <Panel />
      </div>
    </div>
  );
}
